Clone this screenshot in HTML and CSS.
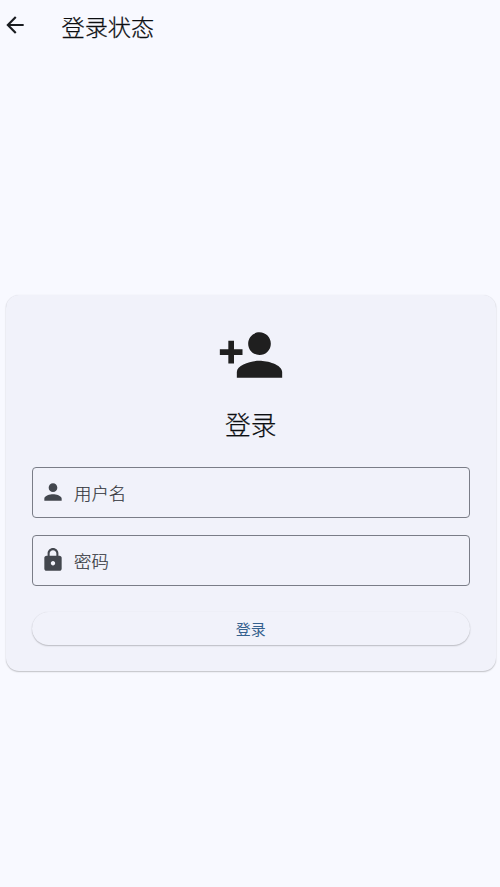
FILE: index.html
```html
<!DOCTYPE html>
<html lang="zh-CN">
<head>
<meta charset="utf-8">
<title>登录状态</title>
<link rel="stylesheet" href="styles.css">
</head>
<body>
<header class="bar">
  <svg class="back" viewBox="0 0 24 24"><path d="M7.700 12.900l5.700 5.700L12 20l-8-8 8-8 1.400 1.400-5.700 5.700H20v1.800z"/></svg>
  <h1 class="bar-title">登录状态</h1>
</header>
<main class="content">
  <form class="card">
    <svg class="hero" viewBox="0 0 24 24"><path d="M15 12c2.210 0 4-1.790 4-4s-1.790-4-4-4-4 1.790-4 4 1.790 4 4 4zm-9-2V7H4v3H1v2h3v3h2v-3h3v-2zm9 4c-2.670 0-8 1.340-8 4v2h16v-2c0-2.660-5.330-4-8-4z"/></svg>
    <h2 class="heading">登录</h2>
    <label class="field">
      <svg class="field-icon" viewBox="0 0 24 24"><path d="M12 12c2.210 0 4-1.790 4-4s-1.790-4-4-4-4 1.790-4 4 1.790 4 4 4zm0 2c-2.670 0-8 1.340-8 4v2h16v-2c0-2.660-5.330-4-8-4z"/></svg>
      <span class="field-label">用户名</span>
    </label>
    <label class="field">
      <svg class="field-icon" viewBox="0 0 24 24"><path d="M18 8h-1V6c0-2.760-2.240-5-5-5S7 3.240 7 6v2H6c-1.100 0-2 .9-2 2v10c0 1.100.9 2 2 2h12c1.100 0 2-.9 2-2V10c0-1.100-.9-2-2-2zm-6 9c-1.100 0-2-.9-2-2s.9-2 2-2 2 .9 2 2-.9 2-2 2zm3.100-9H8.900V6c0-1.710 1.390-3.100 3.100-3.100s3.100 1.390 3.100 3.100z"/></svg>
      <span class="field-label">密码</span>
    </label>
    <button class="submit" type="button">登录</button>
  </form>
</main>
</body>
</html>
```
FILE: styles.css
```css
* { box-sizing: border-box; }
body {
  margin: 0;
  height: 887px;
  display: flex;
  flex-direction: column;
  background: #f8f9ff;
  color: #191c20;
  font-family: "Noto Sans CJK SC", sans-serif;
  font-weight: 300;
}
.bar {
  height: 52px;
  padding-left: 2px;
  display: flex;
  align-items: center;
}
.back { width: 26px; height: 26px; margin-top: -1.500px; fill: #191c20; }
.bar-title {
  margin: 0 0 0 33.500px;
  font-size: 23.2px;
  line-height: 34px;
  font-weight: 300;
  color: #0c0e11;
  -webkit-text-stroke: .25px;
}
.content {
  flex: 1;
  padding: 243px 4.500px 0 6px;
}
.card {
  height: 375.500px;
  padding: 26px 25.500px;
  display: flex;
  flex-direction: column;
  background: #f1f2fa;
  border-radius: 13px;
  box-shadow: 0 1px 1.500px rgba(0, 0, 0, .22), 0 0 1px rgba(0, 0, 0, .1);
}
.hero {
  width: 68px;
  height: 68px;
  flex: none;
  align-self: center;
  fill: #1f1f1f;
}
.heading {
  margin: 17px 0 25px;
  text-align: center;
  font-size: 25.7px;
  line-height: 36px;
  font-weight: 300;
  color: #0c0e11;
  -webkit-text-stroke: .25px;
}
.field {
  height: 51px;
  flex: none;
  margin-bottom: 17px;
  padding-left: 7px;
  display: flex;
  align-items: center;
  border: 1px solid #7a7d87;
  border-radius: 4px;
  color: #363940;
}
.field-icon { width: 26px; height: 26px; margin-top: -1px; fill: #43474e; }
.field-label { margin-left: 8.500px; font-size: 17.4px; -webkit-text-stroke: .2px; }
.submit {
  height: 33px;
  flex: none;
  margin: 9px 0 0;
  padding: 0;
  border: 0;
  border-radius: 17px;
  background: #f1f2fa;
  color: #36618e;
  font: 400 15px/33px "Noto Sans CJK SC", sans-serif;
  box-shadow: 0 1px 1.500px rgba(0, 0, 0, .22), 0 0 1px rgba(0, 0, 0, .1);
}
```
